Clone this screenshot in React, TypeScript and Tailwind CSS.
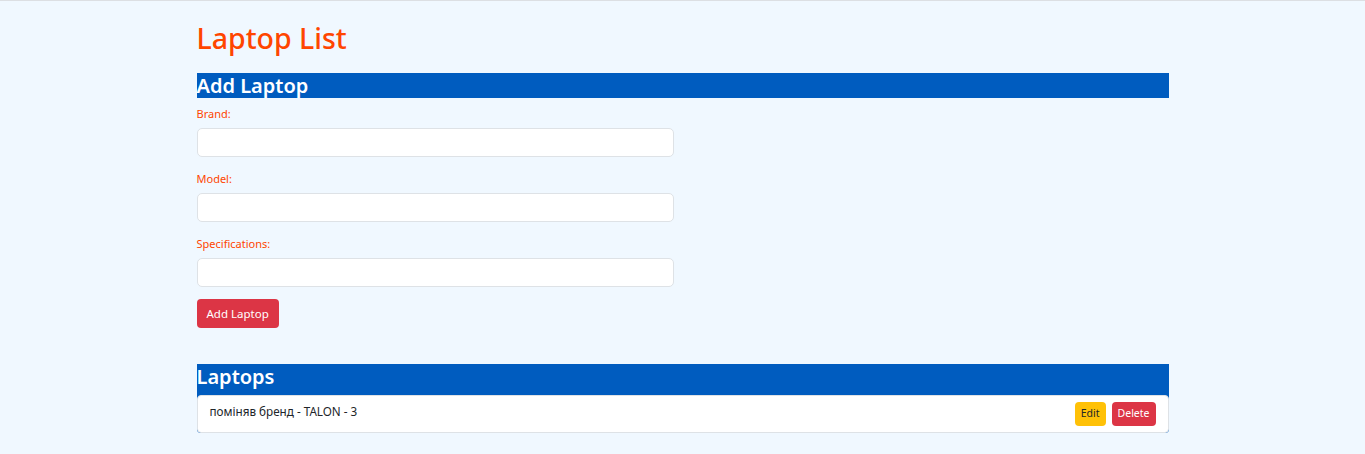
const field = [
  { id: "brand", label: "Brand:" },
  { id: "model", label: "Model:" },
  { id: "specs", label: "Specifications:" },
];

export default function App() {
  return (
    <div
      className="min-h-[454px] border-t border-[#dcdfe3] bg-[#f0f8ff]"
      style={{ fontFamily: '"Noto Sans", "Open Sans", sans-serif' }}
    >
      <div className="mx-auto w-[972px] pt-[17px]">
        <h1 className="mb-[15px] text-[28.5px] font-medium leading-[40px] text-[#ff4500]">Laptop List</h1>

        <h2 className="h-[25px] bg-[#005cbf] text-[20px] font-semibold leading-[25px] text-white">
          Add Laptop
        </h2>

        <form className="pt-[7px]">
          {field.map((f) => (
            <div key={f.id} className="mb-[13px]">
              <label htmlFor={f.id} className="mb-[5px] block text-[11px] leading-[18px] text-[#ff4500]">
                {f.label}
              </label>
              <input
                id={f.id}
                type="text"
                className="block h-[29px] w-[477px] rounded-[5px] border border-[#dee2e6] bg-white px-2 text-sm"
              />
            </div>
          ))}
          <button
            type="button"
            className="mt-[-1px] h-[29px] rounded-[4px] bg-[#dc3545] px-[10px] text-[11.5px] text-white"
          >
            Add Laptop
          </button>
        </form>

        <section className="mt-[36px] rounded-b-[4px] bg-[#005cbf]">
          <h2 className="h-[31px] text-[20px] font-semibold leading-[25px] text-white">Laptops</h2>
          <ul>
            <li className="flex h-[38px] items-center justify-between rounded-[4px] border border-[#dee2e6] bg-white pl-[12px] pr-[12px]">
              <span className="-mt-[4px] text-[11.7px] text-[#212529]">поміняв бренд - TALON - 3</span>
              <div className="flex gap-[6px]">
                <button className="h-[24px] rounded-[4px] bg-[#ffc107] px-[6px] text-[10.5px] text-[#212529]">
                  Edit
                </button>
                <button className="h-[24px] rounded-[4px] bg-[#dc3545] px-[6px] text-[10.5px] text-white">
                  Delete
                </button>
              </div>
            </li>
          </ul>
        </section>
      </div>
    </div>
  );
}
